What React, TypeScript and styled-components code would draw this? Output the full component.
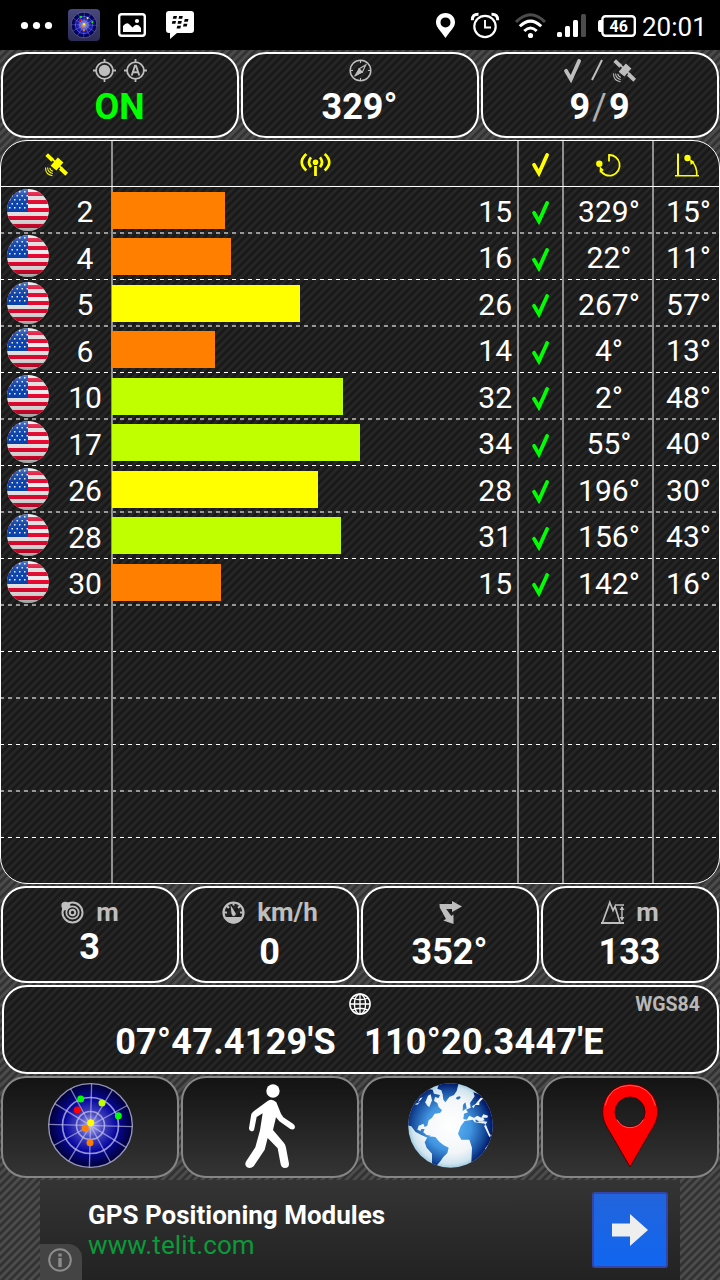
import React from "react";
import styled, { createGlobalStyle } from "styled-components";

const GlobalStyle = createGlobalStyle`
  * {
    box-sizing: border-box;
  }

  body {
    margin: 0;
    background: #333333;
    font-family: Roboto, "Liberation Sans", sans-serif;
  }

  svg {
    display: block;
    flex-shrink: 0;
    overflow: visible;
  }
`;

const Screen = styled.div`
  width: 720px;
  height: 1280px;
  display: flex;
  flex-direction: column;
  gap: 2px;
  overflow: hidden;
  color: #ffffff;
  background-color: #333333;
  background-image: linear-gradient(
    135deg,
    #323232 0 22%,
    #4c4c4c 28% 47%,
    #323232 53% 72%,
    #4c4c4c 78% 97%,
    #323232 100%
  );
  background-size: 8px 8px;
`;

const StatusBar = styled.header`
  height: 50px;
  flex-shrink: 0;
  padding: 0 13px 0 20px;
  display: flex;
  justify-content: space-between;
  background: #000000;
`;

const StatusGroup = styled.div<{ gap: number }>`
  display: flex;
  align-items: center;
  gap: ${({ gap }) => gap}px;
`;

const Clock = styled.span`
  width: 65px;
  margin-left: -6px;
  padding-top: 4px;
  font-size: 26px;
  line-height: 30px;
  white-space: nowrap;
`;

const Row = styled.div<{ height: number }>`
  height: ${({ height }) => height}px;
  flex-shrink: 0;
  padding: 0 1px;
  display: flex;
  gap: 2px;
`;

const Panel = styled.div<{ top: number }>`
  flex: 1;
  padding-top: ${({ top }) => top}px;
  display: flex;
  flex-direction: column;
  align-items: center;
  border: 2px solid #ffffff;
  border-radius: 25px;
  background: rgba(0, 0, 0, 0.5);
`;

const PanelHead = styled.div<{ gap: number }>`
  height: 22px;
  display: flex;
  align-items: center;
  gap: ${({ gap }) => gap}px;
  color: #bebebe;
  font-size: 26px;
  line-height: 22px;
  font-weight: 700;
`;

const Value = styled.div<{ offset: number; color?: string }>`
  margin-top: ${({ offset }) => offset}px;
  padding-right: 1px;
  font-size: 36px;
  line-height: 36px;
  font-weight: 700;
  white-space: pre;
  color: ${({ color }) => color || "#ffffff"};
`;

const Divider = styled.span`
  margin: 0 2px;
  color: #b0b0b0;
  font-weight: 400;
`;

const Table = styled.section`
  height: 744px;
  flex-shrink: 0;
  display: flex;
  flex-direction: column;
  border: 1px solid #ffffff;
  border-radius: 27px;
  overflow: hidden;
  background: rgba(0, 0, 0, 0.5);
`;

const TableRow = styled.div<{ kind: "head" | "soft" | "sharp" | "last" }>`
  height: ${({ kind }) => ({ head: 46, soft: 47, sharp: 46, last: 45 })[kind]}px;
  flex-shrink: 0;
  display: grid;
  grid-template-columns: 112px 406px 45px 90px 65px;
  border-bottom: ${({ kind }) => (kind === "head" ? "1px solid #ffffff" : "0")};
  background: ${({ kind }) =>
    kind === "soft"
      ? "repeating-linear-gradient(90deg, #999999 0 3px, transparent 3px 7px, #999999 7px 8px) left bottom / 100% 2px no-repeat"
      : kind === "sharp"
        ? "repeating-linear-gradient(90deg, #ffffff 0 3px, transparent 3px 7px, #ffffff 7px 8px) left bottom / 100% 1px no-repeat"
        : "none"};
`;

const Cell = styled.div<{ align?: string; drop?: number; shift?: number }>`
  min-width: 0;
  height: 100%;
  padding-top: ${({ drop = 0 }) => drop}px;
  padding-left: ${({ shift = 0 }) => shift}px;
  display: flex;
  align-items: center;
  justify-content: ${({ align }) => align || "center"};
  border-right: 2px solid #919191;
  font-size: 30px;
  line-height: 36px;

  &:last-child {
    border-right: 0;
  }
`;

const SatelliteId = styled.span`
  width: 54px;
  margin-left: 10px;
  padding-top: 3px;
  text-align: center;
`;

const FlagBox = styled.div`
  margin-left: 6px;
  margin-top: -2px;
`;

const Bar = styled.div`
  height: 37px;
  margin: -1px 0 0 -1px;
`;

const Strength = styled.span`
  margin-left: auto;
  padding: 2px 5px 0 0;
`;

const PositionPanel = styled.div`
  flex: 1;
  margin: 0 0 0 1px;
  padding: 6px 17px 0 15px;
  display: grid;
  grid-template-columns: 1fr 22px 1fr;
  align-content: start;
  border: 2px solid #ffffff;
  border-radius: 25px;
  background: rgba(0, 0, 0, 0.5);
`;

const Datum = styled.span`
  padding-top: 1px;
  justify-self: end;
  color: #b8b8b8;
  font-size: 19.5px;
  line-height: 22px;
  font-weight: 700;
`;

const Coordinates = styled.div`
  grid-column: 1 / -1;
  margin-top: 8px;
  display: flex;
  justify-content: center;
  gap: 28px;
  font-size: 36px;
  line-height: 36px;
  font-weight: 700;
  letter-spacing: 0.26px;
`;

const NavButton = styled.button`
  flex: 1;
  padding: 0 0 3px;
  display: flex;
  align-items: center;
  justify-content: center;
  border: 2px solid #868686;
  border-radius: 25px;
  background: linear-gradient(#131313, #343434);
`;

const Ad = styled.aside`
  height: 100px;
  flex-shrink: 0;
  margin: 0 40px;
  padding-right: 12px;
  display: flex;
  align-items: center;
  background: linear-gradient(#343434, #222222);
`;

const AdInfo = styled.div`
  width: 42px;
  height: 36px;
  align-self: flex-end;
  padding: 4px 0 0 8px;
  border-top-right-radius: 14px;
  background: #444444;
`;

const AdText = styled.div`
  flex: 1;
  padding: 0 0 0 6px;
  font-size: 26px;
  line-height: 30px;
`;

const AdTitle = styled.div`
  font-weight: 700;
`;

const AdUrl = styled.div`
  color: #0a9a3a;
  letter-spacing: 0.1px;
`;

const AdButton = styled.div`
  width: 76px;
  height: 76px;
  display: flex;
  align-items: center;
  justify-content: center;
  border: 2px solid #3344aa;
  border-radius: 3px;
  background: linear-gradient(#2264dc, #1166f0);
`;

const GREY = "#bebebe";
const YELLOW = "#ffff00";

const Check = ({ color }: { color: string }) => (
  <svg width="17" height="23" viewBox="0 0 17 23" fill="none" stroke={color}>
    <path d="M2 11.8L6.9 20.2L15.1 2" strokeWidth="3.8" strokeLinecap="round" />
    <path d="M4.6 17L7 22.6L9.4 18Z" fill={color} strokeWidth="0.6" />
  </svg>
);

const Satellite = ({ color }: { color: string }) => (
  <svg width="23" height="23" viewBox="0 0 23 23" fill={color}>
    <path d="M12.8 4.6L18.4 9.6L11.4 17.6L5.6 12.8Z" />
    <path d="M3 .2L9 6L6.4 8.8L.4 3Z" />
    <path d="M16.6 13.6L23 19.8L20.4 22.8L14 16.7Z" />
    <path d="M6 4.6L17.5 16.2" stroke={color} strokeWidth="1.8" />
    <g fill="none" stroke={color} strokeWidth="1.1">
      <path d="M4.8 14.8Q5 17.6 8 18.2" />
      <path d="M2.6 14.6Q2.7 19.6 7.8 20.5" />
      <path d="M.5 14.5Q.5 21.8 7.5 22.7" />
    </g>
  </svg>
);

const Antenna = () => (
  <svg width="31" height="23" viewBox="0 0 31 23" fill="none" stroke={YELLOW}>
    <circle cx="15.5" cy="9.3" r="2.8" fill={YELLOW} stroke="none" />
    <path d="M15.5 13V23" strokeWidth="2.8" />
    <path
      d="M11 4.3Q6.8 9.2 11 14.2M20 4.3Q24.2 9.2 20 14.2"
      strokeWidth="2.7"
    />
    <path d="M6.3 1Q-2.8 9.2 6.3 17.4M24.7 1Q33.8 9.2 24.7 17.4" strokeWidth="2.7" />
  </svg>
);

const Azimuth = () => (
  <svg width="24" height="24" viewBox="0 0 24 24" fill="none" stroke={YELLOW}>
    <path d="M13 8.5V2A10.3 10.3 0 1 1 4.2 17" strokeWidth="1.8" />
    <circle cx="3.3" cy="10.8" r="3.2" fill={YELLOW} stroke="none" />
    <path d="M3.7 13.3L7.8 17L3.8 20Z" fill={YELLOW} stroke="none" />
  </svg>
);

const Elevation = () => (
  <svg width="24" height="24" viewBox="0 0 24 24" fill="none" stroke={YELLOW}>
    <path d="M3 .5V22.5" strokeWidth="2" />
    <path d="M0 22.7H24" strokeWidth="1.6" />
    <path d="M21.8 22Q22 13 16.5 8" strokeWidth="1.6" />
    <circle cx="12.5" cy="5" r="3.2" fill={YELLOW} stroke="none" />
    <path d="M15 6.3L19.6 9L15.7 12Z" fill={YELLOW} stroke="none" />
  </svg>
);

const Crosshair = ({ auto }: { auto?: boolean }) => (
  <svg width="23" height="23" viewBox="0 0 23 23" fill="none" stroke={GREY}>
    <circle cx="11.5" cy="11.5" r="8.4" strokeWidth="1.8" />
    <path d="M11.5 0V4M11.5 19V23M0 11.5H4M19 11.5H23" strokeWidth="1.8" />
    {auto ? (
      <path d="M7.7 16.5L11 6.8H12L15.3 16.5M9 13.2H14" strokeWidth="1.9" />
    ) : (
      <circle cx="11.5" cy="11.5" r="5.7" fill={GREY} stroke="none" />
    )}
  </svg>
);

const Compass = () => (
  <svg width="23" height="23" viewBox="0 0 23 23" fill="none" stroke={GREY}>
    <circle cx="11.5" cy="11.5" r="10.3" strokeWidth="1.5" />
    <path d="M16.7 6L13.3 13.2L10 9.8Z" strokeWidth="1.2" />
    <path d="M5.7 17.2L10 9.8L13.3 13.2Z" fill={GREY} strokeWidth="1" />
    <path d="M11.5 2V4M11.5 19V21M2 11.5H4M19 11.5H21" strokeWidth="1" />
  </svg>
);

const Accuracy = () => (
  <svg width="23" height="23" viewBox="0 0 23 23" fill="none" stroke={GREY}>
    <circle cx="11.5" cy="11.5" r="10" strokeWidth="2" />
    <circle cx="11.5" cy="11.5" r="6.2" strokeWidth="1.8" />
    <circle cx="11.5" cy="11.5" r="2.7" strokeWidth="2" />
    <path d="M1 2Q5-1 9 2.7L9.5 5L5 9L3 9.5Q-1 6 1 2Z" fill={GREY} stroke="none" />
  </svg>
);

const Speedometer = () => (
  <svg width="23" height="23" viewBox="0 0 23 23" fill="none" stroke={GREY}>
    <circle cx="11.5" cy="11.5" r="10" strokeWidth="2.2" />
    <path d="M2.8 16.5H20.2Q17 22.2 11.5 22.2Q6 22.2 2.8 16.5Z" fill={GREY} />
    <path
      d="M1.5 11.5H5M18 11.5H21.5M4.5 4.5L7 7M18.5 4.5L16 7M11.5 2V4.5"
      strokeWidth="2"
    />
    <path d="M8.5 4L13.8 12.5Q13.8 15 11.5 15Q9.6 14.5 9.5 12.5Z" fill={GREY} stroke="none" />
  </svg>
);

const Heading = () => (
  <svg width="23" height="23" viewBox="0 0 23 23" fill={GREY}>
    <path d="M.5 3H13V0L23 5.5L13 11V8H5Z" />
    <path d="M.5 3L5 5L12.3 15L14.5 13.5V23L4.3 19.5L7 18L.7 6.5Z" />
  </svg>
);

const Altitude = () => (
  <svg width="23" height="23" viewBox="0 0 23 23" fill="none" stroke={GREY}>
    <path d="M0 22H23" strokeWidth="2" />
    <path d="M1.5 21.5L8.8 1.5L12 9.5L14 5.5L19 21.5" strokeWidth="1.7" />
    <path d="M14 4H23M21 6V18" strokeWidth="1.4" />
    <path d="M18.6 9L21 5L23.4 9ZM18.6 16L21 20L23.4 16Z" fill={GREY} stroke="none" />
  </svg>
);

const Globe = () => (
  <svg width="22" height="22" viewBox="0 0 22 22" fill="none" stroke="#ffffff">
    <circle cx="11" cy="11" r="10.1" strokeWidth="1.5" />
    <ellipse cx="11" cy="11" rx="5.6" ry="10" strokeWidth="1.3" />
    <path
      d="M11 1V21M1 11H21M3 5Q11 8.5 19 5M3 17Q11 13.5 19 17"
      strokeWidth="1.3"
    />
  </svg>
);

const blips = [
  [242, 86, "#00ff00"],
  [306, 98, "#c0ff00"],
  [355, 136, "#00ff00"],
  [232, 119, "#ff0000"],
  [272, 157, "#ffff00"],
  [256, 174, "#ff8000"],
  [270, 217, "#ff8000"],
] as const;

const Radar = ({ size, id }: { size: number; id: string }) => (
  <svg width={size} height={size} viewBox="144 38 255 255">
    <defs>
      <radialGradient id={id}>
        <stop offset="0" stopColor="#b8b8f4" />
        <stop offset="0.3" stopColor="#4545c0" />
        <stop offset="0.62" stopColor="#0808a0" />
        <stop offset="1" stopColor="#000035" />
      </radialGradient>
    </defs>
    <circle cx="271.5" cy="165.5" r="125.5" fill={`url(#${id})`} />
    <g fill="none" stroke="#c0c0e8" strokeOpacity="0.75">
      {[0, 30, 60, 90, 120, 150].map((angle) => (
        <path
          key={angle}
          d="M146 165.5H397"
          strokeWidth="4"
          strokeOpacity="0.65"
          transform={`rotate(${angle + 1.5} 271.5 165.5)`}
        />
      ))}
      <circle cx="271.5" cy="165.5" r="125.5" strokeWidth="4" />
      <circle cx="271.5" cy="165.5" r="84" strokeWidth="5" />
      <circle cx="271.5" cy="165.5" r="42" strokeWidth="5" />
    </g>
    {blips.map(([x, y, color]) => (
      <circle key={`${x}-${y}`} cx={x} cy={y} r="10.5" fill={color} />
    ))}
  </svg>
);

const Walker = () => (
  <svg width="52" height="85" viewBox="732 38 156 255" fill="#ffffff">
    <circle cx="819" cy="62" r="20" />
    <path d="M804 91Q817 84 829 96L843 130L850 141L880 161Q888 168 883 175Q879 179 871 176L838 153L828 141L819 179L852 218Q857 224 858 232L867 280Q867 293 855 293Q844 293 842 282L833 234L803 203L794 238L761 288Q752 296 741 291Q732 283 739 272L766 231L780 180L788 129L770 140L763 175Q762 183 754 183Q746 181 747 173L754 131Q756 126 763 121Z" />
  </svg>
);

const Earth = () => (
  <svg width="85" height="85" viewBox="144 38 255 255">
    <defs>
      <radialGradient id="ocean">
        <stop offset="0" stopColor="#ffffff" />
        <stop offset="0.65" stopColor="#f3f6f8" />
        <stop offset="0.9" stopColor="#cfe4ef" />
        <stop offset="1" stopColor="#9fcbe0" />
      </radialGradient>
      <radialGradient id="land" gradientUnits="userSpaceOnUse" cx="265" cy="170" r="135">
        <stop offset="0" stopColor="#62bafc" />
        <stop offset="0.5" stopColor="#4094e0" />
        <stop offset="0.8" stopColor="#174e9e" />
        <stop offset="1" stopColor="#001060" />
      </radialGradient>
      <clipPath id="earthDisc">
        <circle cx="271.5" cy="165.5" r="127" />
      </clipPath>
    </defs>
    <g clipPath="url(#earthDisc)">
      <rect x="144" y="38" width="255" height="255" fill="url(#ocean)" />
      <g fill="url(#land)">
        <path d="M140 165V70L200 55L218 58L222 70L240 74L236 83L225 80L222 92L232 98L236 110L246 120L240 128L224 130L216 142L206 150L202 166L194 170L190 160L176 166L172 178L182 182L184 176L194 176L190 186L200 194L212 196L202 202L184 194L166 184L154 168Z" />
        <path d="M238 38H296L290 62L282 74L268 80L256 96L250 88L248 72L244 60L232 55Z" />
        <path d="M290 80L300 78L302 83L294 88L288 85Z" />
        <path d="M204 198L226 200L238 214L250 224L266 232L262 248L250 260L240 274L228 288L216 286L216 250L200 232L194 216Z" />
        <path d="M314 152L338 148L344 156L360 158L374 160L388 194L399 198L390 214L384 234L366 256L350 276L334 276L336 232L328 208L304 208L294 190L302 168Z" />
        <path d="M310 146L312 130L324 126L318 118L332 112L330 98L344 78L340 66L370 76L399 130V196L386 190L376 164L382 154L368 152L348 156L344 144L328 136L320 148Z" />
        <path d="M309 104L316 96L320 114L308 122Z" />
      </g>
      <g fill="#eef5fa">
        <path d="M204 76L212 72L216 90L208 110L202 106L196 96Z" />
        <path d="M352 94L362 82L370 84L358 96L358 104L346 104L340 114L336 108L346 102Z" />
        <path d="M342 142L352 136L364 142L370 132L384 136L382 142L370 142L374 150L358 154L350 148L344 148Z" />
        <path d="M372 166L378 164L392 198L388 200Z" />
        <path d="M376 234L386 222L384 230L378 240Z" />
        <path d="M180 84L188 81L182 89L174 96ZM164 102L180 95L172 103Z" />
      </g>
    </g>
  </svg>
);

const MapPin = () => (
  <svg width="58" height="85" viewBox="724 40 174 255">
    <path
      fillRule="evenodd"
      d="M811 43C765 43 729 80 729 126C729 150 737 165 751 188L811 292L871 188C885 165 894 150 894 126C894 80 858 43 811 43ZM811 82A45 45 0 1 1 811 172A45 45 0 1 1 811 82Z"
      fill="#ff0000"
      stroke="#4a0000"
      strokeWidth="3"
    />
    <path
      d="M736 108Q750 48 811 47Q872 48 887 108M772 150Q785 174 811 174Q838 174 851 150"
      fill="none"
      stroke="#ff5555"
      strokeWidth="3"
    />
  </svg>
);

const UsFlag = () => (
  <svg width="42" height="42" viewBox="0 0 42 42">
    <defs>
      <clipPath id="flagDisc">
        <circle cx="21" cy="21" r="21" />
      </clipPath>
      <linearGradient id="flagShade" x2="0" y2="1">
        <stop offset="0" stopColor="#ffffff" stopOpacity="0.3" />
        <stop offset="0.4" stopColor="#000000" stopOpacity="0.02" />
        <stop offset="0.8" stopColor="#000000" stopOpacity="0.15" />
        <stop offset="1" stopColor="#000000" stopOpacity="0.35" />
      </linearGradient>
    </defs>
    <g clipPath="url(#flagDisc)">
      <rect width="42" height="42" fill="#f4f2f2" />
      {[3, 11, 19, 27, 35].map((y) => (
        <rect key={y} y={y} width="42" height="4" fill="#f20a34" />
      ))}
      <rect width="21" height="23" fill="#0b45b4" />
      {[2, 6, 10, 14, 18].map((y, row) =>
        [2, 7, 12, 17].map((x) => (
          <rect
            key={`${x}-${y}`}
            x={x + (row % 2) * 2.5}
            y={y}
            width="1.5"
            height="1.5"
            fill="#ffffff"
          />
        ))
      )}
      <rect width="42" height="42" fill="url(#flagShade)" />
    </g>
  </svg>
);

const AppBadge = styled.div`
  width: 32px;
  height: 32px;
  display: flex;
  align-items: center;
  justify-content: center;
  border-radius: 4px;
  background: linear-gradient(#49497f, #2b2b55);
`;

const NotificationIcons = () => (
  <>
    <svg width="30" height="8" viewBox="0 0 30 8" fill="#ffffff">
      <circle cx="4.5" cy="4.5" r="3.6" />
      <circle cx="16.5" cy="4.5" r="3.6" />
      <circle cx="28.5" cy="4.5" r="3.6" />
    </svg>
    <AppBadge>
      <Radar size={26} id="radarSmall" />
    </AppBadge>
    <svg width="30" height="24" viewBox="0 0 30 24">
      <rect x="1.2" y="1.2" width="25.6" height="21.6" rx="2.5" fill="none" stroke="#ffffff" strokeWidth="2.4" />
      <path d="M5 19V13Q9 8 12 12L14.5 14.5Q19 9 23 15V19Z" fill="#ffffff" />
      <circle cx="19" cy="8" r="2.1" fill="#ffffff" />
    </svg>
    <svg width="28" height="28" viewBox="0 0 28 28">
      <path d="M3 0H25Q28 0 28 3V19Q28 22 25 22H11L4 28V22H3Q0 22 0 19V3Q0 0 3 0Z" fill="#ffffff" />
      <path
        d="M7.5 5H11L10.4 7.8H6.8ZM13.2 5H16.8L16.2 7.8H12.5ZM6.5 10H10L9.4 12.8H5.8ZM12.2 10H15.8L15.2 12.8H11.5ZM18.8 8H22.5L21.8 10.8H18ZM17.7 12.8H21.4L20.7 15.6H17ZM11.3 14.8H15L14.3 17.5H10.6Z"
        fill="#000000"
      />
    </svg>
  </>
);

const SystemIcons = () => (
  <>
    <svg width="25" height="25" viewBox="0 0 25 25" fill="#ffffff">
      <path
        fillRule="evenodd"
        d="M10.5 0C5 0 1 4 1 9.3C1 14.2 5 17 10.5 25C16 17 20 14.2 20 9.3C20 4 16 0 10.5 0ZM10.5 4.4A5 5 0 1 1 10.5 14.4A5 5 0 1 1 10.5 4.4Z"
      />
    </svg>
    <svg width="33" height="25" viewBox="0 0 33 25" fill="none" stroke="#ffffff">
      <circle cx="14" cy="13.5" r="10.7" strokeWidth="2.2" />
      <path d="M14 7V14.5H20" strokeWidth="1.9" />
      <path d="M1.3 7.3Q1 1 7.5 1.2M26.7 7.3Q27 1 20.5 1.2" strokeWidth="3" />
    </svg>
    <svg width="31" height="25" viewBox="0 0 31 25" fill="none" stroke="#ffffff">
      <path d="M1 9Q15.5-5.5 30 9" stroke="#4b4b4b" strokeWidth="3" />
      <path d="M4.8 13.3Q15.5 2.8 26.2 13.3M9.3 18Q15.5 12 21.7 18" strokeWidth="3" />
      <circle cx="15.5" cy="22.5" r="2.6" fill="#ffffff" stroke="none" />
    </svg>
    <svg width="30" height="24" viewBox="0 0 30 24" fill="#ffffff">
      <rect y="19" width="5" height="5" rx="1.5" />
      <rect x="8" y="13" width="5" height="11" rx="1.5" />
      <rect x="16" y="7" width="5" height="17" rx="1.5" />
      <rect x="24" y="1" width="5" height="23" rx="1.5" fill="#4b4b4b" />
    </svg>
    <svg width="39" height="22" viewBox="0 -1 39 22">
      <rect x="4.4" y="1.2" width="32.4" height="19.6" rx="3" fill="none" stroke="#ffffff" strokeWidth="2.4" />
      <path d="M4 5H2Q0 5 0 8V14Q0 17 2 17H4Z" fill="#ffffff" />
      <text
        x="20.7"
        y="16.5"
        textAnchor="middle"
        fill="#ffffff"
        fontFamily="Roboto, sans-serif"
        fontSize="16"
        fontWeight="700"
      >
        46
      </text>
    </svg>
  </>
);

interface SatelliteInfo {
  id: number;
  bar: number;
  color: string;
  strength: number;
  azimuth: number;
  elevation: number;
}

const ORANGE = "#ff8000";
const LIME = "#c0ff00";

const satellites: SatelliteInfo[] = [
  { id: 2, bar: 113, color: ORANGE, strength: 15, azimuth: 329, elevation: 15 },
  { id: 4, bar: 119, color: ORANGE, strength: 16, azimuth: 22, elevation: 11 },
  { id: 5, bar: 188, color: YELLOW, strength: 26, azimuth: 267, elevation: 57 },
  { id: 6, bar: 103, color: ORANGE, strength: 14, azimuth: 4, elevation: 13 },
  { id: 10, bar: 231, color: LIME, strength: 32, azimuth: 2, elevation: 48 },
  { id: 17, bar: 248, color: LIME, strength: 34, azimuth: 55, elevation: 40 },
  { id: 26, bar: 206, color: YELLOW, strength: 28, azimuth: 196, elevation: 30 },
  { id: 28, bar: 229, color: LIME, strength: 31, azimuth: 156, elevation: 43 },
  { id: 30, bar: 109, color: ORANGE, strength: 15, azimuth: 142, elevation: 16 },
];

const ROW_COUNT = 15;

function SatelliteRow({ index }: { index: number }) {
  const sat = satellites[index];
  const kind =
    index === ROW_COUNT - 1 ? "last" : index % 2 === 0 ? "soft" : "sharp";

  if (!sat) {
    return (
      <TableRow kind={kind}>
        <Cell />
        <Cell />
        <Cell />
        <Cell />
        <Cell />
      </TableRow>
    );
  }

  return (
    <TableRow kind={kind}>
      <Cell align="flex-start">
        <FlagBox>
          <UsFlag />
        </FlagBox>
        <SatelliteId>{sat.id}</SatelliteId>
      </Cell>
      <Cell align="flex-start">
        <Bar style={{ width: sat.bar, background: sat.color }} />
        <Strength>{sat.strength}</Strength>
      </Cell>
      <Cell drop={4}>
        <Check color="#00ff00" />
      </Cell>
      <Cell drop={2} shift={2}>
        {sat.azimuth}°
      </Cell>
      <Cell drop={2} shift={4}>
        {sat.elevation}°
      </Cell>
    </TableRow>
  );
}

export default function App() {
  return (
    <>
      <GlobalStyle />
      <Screen>
        <StatusBar>
          <StatusGroup gap={18}>
            <NotificationIcons />
          </StatusGroup>
          <StatusGroup gap={11}>
            <SystemIcons />
            <Clock>20:01</Clock>
          </StatusGroup>
        </StatusBar>

        <Row height={86}>
          <Panel top={5}>
            <PanelHead gap={8}>
              <Crosshair />
              <Crosshair auto />
            </PanelHead>
            <Value offset={8} color="#00ff00">
              ON
            </Value>
          </Panel>
          <Panel top={5}>
            <PanelHead gap={8}>
              <Compass />
            </PanelHead>
            <Value offset={8}>329°</Value>
          </Panel>
          <Panel top={5}>
            <PanelHead gap={10}>
              <Check color={GREY} />
              <svg width="12" height="20" viewBox="0 0 12 20">
                <path d="M1 20L11 0" stroke={GREY} strokeWidth="2" />
              </svg>
              <Satellite color={GREY} />
            </PanelHead>
            <Value offset={8}>
              9<Divider>/</Divider>9
            </Value>
          </Panel>
        </Row>

        <Table>
          <TableRow kind="head">
            <Cell drop={2}>
              <Satellite color={YELLOW} />
            </Cell>
            <Cell drop={2}>
              <Antenna />
            </Cell>
            <Cell drop={2}>
              <Check color={YELLOW} />
            </Cell>
            <Cell drop={3}>
              <Azimuth />
            </Cell>
            <Cell drop={2}>
              <Elevation />
            </Cell>
          </TableRow>
          {Array.from({ length: ROW_COUNT }, (_, index) => (
            <SatelliteRow key={index} index={index} />
          ))}
        </Table>

        <Row height={97}>
          <Panel top={13}>
            <PanelHead gap={12}>
              <Accuracy />m
            </PanelHead>
            <Value offset={6}>3</Value>
          </Panel>
          <Panel top={13}>
            <PanelHead gap={12}>
              <Speedometer />
              km/h
            </PanelHead>
            <Value offset={11}>0</Value>
          </Panel>
          <Panel top={13}>
            <PanelHead gap={12}>
              <Heading />
            </PanelHead>
            <Value offset={11}>352°</Value>
          </Panel>
          <Panel top={13}>
            <PanelHead gap={12}>
              <Altitude />m
            </PanelHead>
            <Value offset={11}>133</Value>
          </Panel>
        </Row>

        <Row height={89}>
          <PositionPanel>
            <span />
            <Globe />
            <Datum>WGS84</Datum>
            <Coordinates>
              <span>07°47.4129'S</span>
              <span>110°20.3447'E</span>
            </Coordinates>
          </PositionPanel>
        </Row>

        <Row height={102}>
          <NavButton>
            <Radar size={85} id="radarLarge" />
          </NavButton>
          <NavButton>
            <Walker />
          </NavButton>
          <NavButton>
            <Earth />
          </NavButton>
          <NavButton>
            <MapPin />
          </NavButton>
        </Row>

        <Ad>
          <AdInfo>
            <svg width="24" height="24" viewBox="0 0 24 24" fill="none" stroke="#8c8c8c">
              <circle cx="12" cy="12" r="10.8" strokeWidth="2" />
              <path d="M12 10V19M12 5.5V8.5" strokeWidth="3.4" />
            </svg>
          </AdInfo>
          <AdText>
            <AdTitle>GPS Positioning Modules</AdTitle>
            <AdUrl>www.telit.com</AdUrl>
          </AdText>
          <AdButton>
            <svg width="36" height="32" viewBox="0 0 36 32">
              <path d="M0 9.5H18V0L36 16L18 32V22.5H0Z" fill="#eeeeee" />
            </svg>
          </AdButton>
        </Ad>
      </Screen>
    </>
  );
}
